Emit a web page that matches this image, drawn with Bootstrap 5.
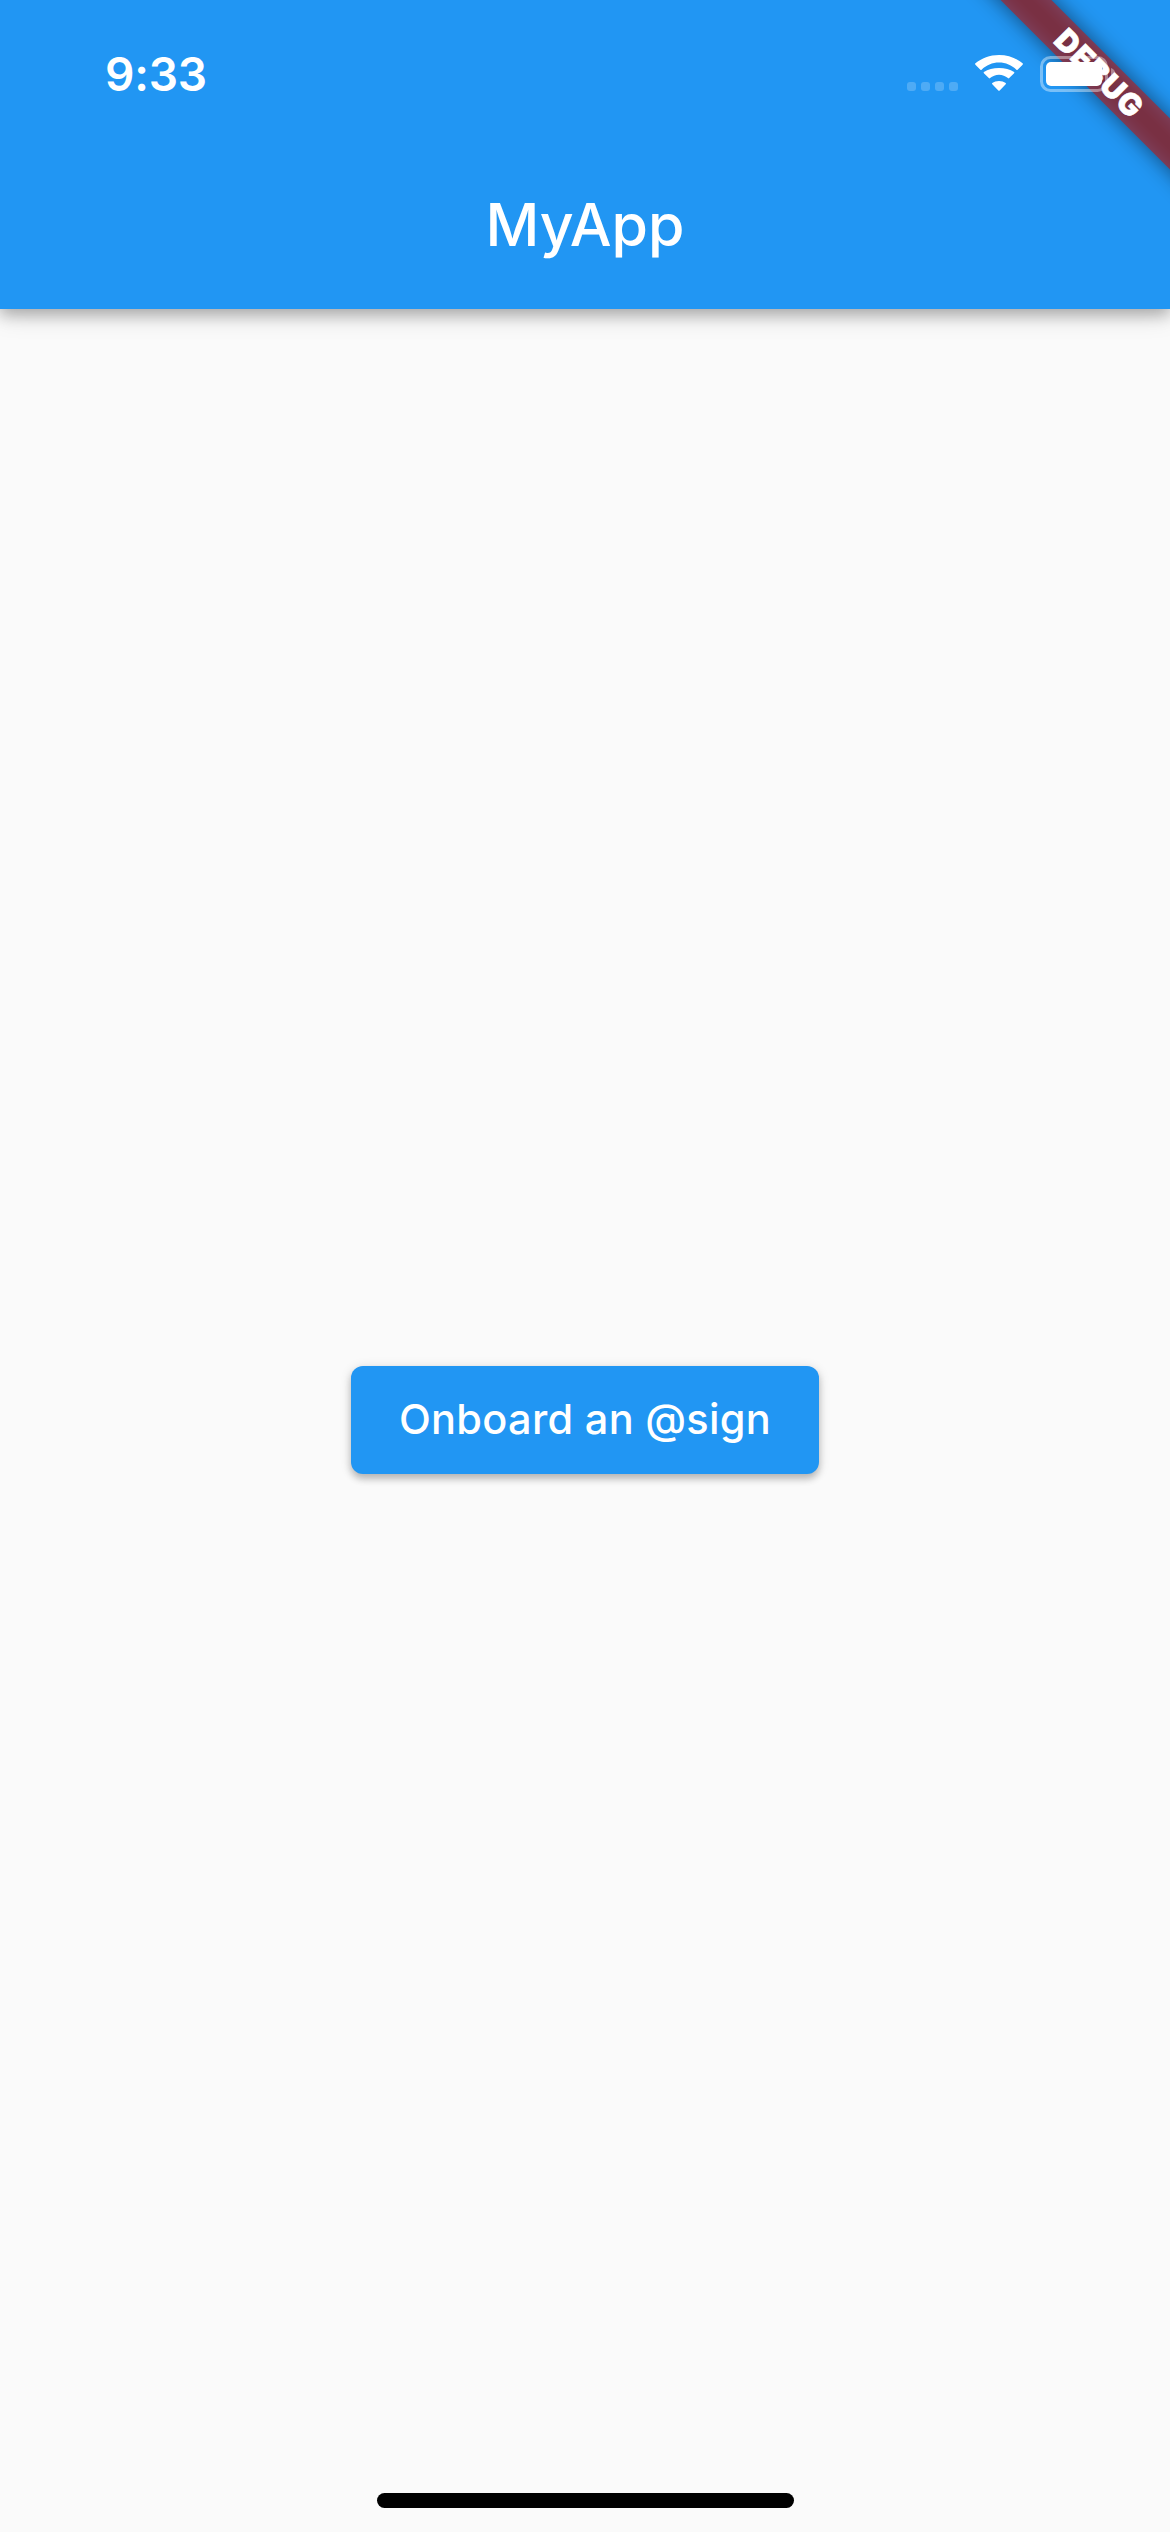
<!DOCTYPE html>
<html lang="en">
<head>
<meta charset="utf-8">
<meta name="viewport" content="width=device-width, initial-scale=1">
<title>MyApp</title>
<link href="https://cdn.jsdelivr.net/npm/bootstrap@5.3.0/dist/css/bootstrap.min.css" rel="stylesheet">
<style>
  body { background: #fafafa; font-family: Inter, "Liberation Sans", sans-serif; }
  .app-screen { width: 1170px; height: 2532px; }
  .app-header { height: 309px; background: #2196f3; color: #fff;
    box-shadow: 0 6px 14px rgba(0,0,0,.24), 0 4px 26px rgba(0,0,0,.16); }
  .status-bar { height: 141px; padding: 0 57px 0 105px; }
  .status-time { font-size: 46px; font-weight: 600; line-height: 56px; margin-top: 46px; letter-spacing: -.2px; }
  .status-icons { margin-top: 51px; position: relative; z-index: 3; }
  .toolbar-row { height: 168px; }
  .app-title { font-size: 59px; font-weight: 500; line-height: 72px; letter-spacing: 0; }
  .debug-corner { top: 0; right: 0; width: 300px; height: 300px; z-index: 2; pointer-events: none; }
  .debug-ribbon { width: 360px; height: 36px; left: 48px; top: 54px; padding-left: 4px; transform: rotate(45deg);
    font-size: 30.500px; font-weight: 900; line-height: 36px; letter-spacing: 1px; -webkit-text-stroke: .6px #fff; }
  .debug-ribbon::before, .debug-ribbon::after { content: ""; position: absolute; inset: 0; }
  .debug-ribbon::before { background: rgba(0,0,0,.5); filter: blur(10.9px); }
  .debug-ribbon::after { background: rgba(183,28,28,.627); }
  .debug-ribbon span { position: relative; z-index: 1; }
  .btn-onboard { width: 468px; height: 108px; border: 0; border-radius: 12px; background: #2196f3; color: #fff;
    font-size: 41.500px; font-weight: 500; letter-spacing: .3px; margin-top: 38px; padding: 0 0 2px; white-space: nowrap;
    box-shadow: 0 5px 7px rgba(0,0,0,.2), 0 2px 12px rgba(0,0,0,.14); }
  .btn-onboard:hover { background: #2196f3; color: #fff; }
  .home-bar { width: 417px; height: 15px; margin-bottom: 24px; }
</style>
</head>
<body>
<div class="app-screen d-flex flex-column position-relative overflow-hidden">
  <header class="app-header flex-shrink-0">
    <div class="status-bar d-flex justify-content-between align-items-start">
      <div class="status-time">9:33</div>
      <svg class="status-icons" width="210" height="44" viewBox="903 51 210 44" fill="#fff" overflow="visible" aria-hidden="true">
        <g opacity=".2">
          <rect x="907" y="82" width="9" height="9" rx="3"/><rect x="921" y="82" width="9" height="9" rx="3"/>
          <rect x="935" y="82" width="9" height="9" rx="3"/><rect x="949" y="82" width="9" height="9" rx="3"/>
        </g>
        <path d="M999 62.500c6.700 0 12.800 2.700 17.400 7.200q.6.600 1.200 0l5-5q.6-.7 0-1.400C1016.500 58.300 1008.100 55 999 55s-17.500 3.300-23.600 8.300q-.6.700 0 1.400l5 5q.6.600 1.200 0c4.600-4.500 10.700-7.200 17.400-7.200z"/>
        <path d="M999 74.700c3.400 0 6.500 1.300 8.900 3.400q.7.600 1.300 0l4.900-4.900q.6-.6 0-1.200C1010.100 69.500 1004.800 68 999 68s-11.100 1.500-15.100 4q-.6.600 0 1.200l4.900 4.900q.6.600 1.300 0c2.400-2.100 5.500-3.400 8.900-3.400z"/>
        <path d="M1005.700 84.200q.6-.6 0-1.200C1004 81.700 1001.600 81 999 81s-5 .7-6.700 2q-.6.600 0 1.200l6 6.200q.7.700 1.400 0z"/>
        <rect x="1041.500" y="57.500" width="65" height="33" rx="9" fill="none" stroke="#fff" stroke-width="3" opacity=".4"/>
        <path d="M1111 68c3 1 4.500 3.500 4.500 6s-1.500 5-4.500 6z" opacity=".4"/>
        <rect x="1046" y="62" width="56" height="24" rx="5"/>
      </svg>
    </div>
    <div class="toolbar-row d-flex align-items-center justify-content-center">
      <h1 class="app-title mb-0">MyApp</h1>
    </div>
  </header>
  <div class="debug-corner position-absolute overflow-hidden">
    <div class="debug-ribbon position-absolute text-white text-center"><span>DEBUG</span></div>
  </div>
  <main class="flex-grow-1 d-flex align-items-center justify-content-center">
    <button type="button" class="btn btn-onboard">Onboard an @sign</button>
  </main>
  <footer class="d-flex justify-content-center flex-shrink-0">
    <div class="home-bar bg-black rounded-pill"></div>
  </footer>
</div>
<script src="https://cdn.jsdelivr.net/npm/bootstrap@5.3.0/dist/js/bootstrap.bundle.min.js"></script>
</body>
</html>
